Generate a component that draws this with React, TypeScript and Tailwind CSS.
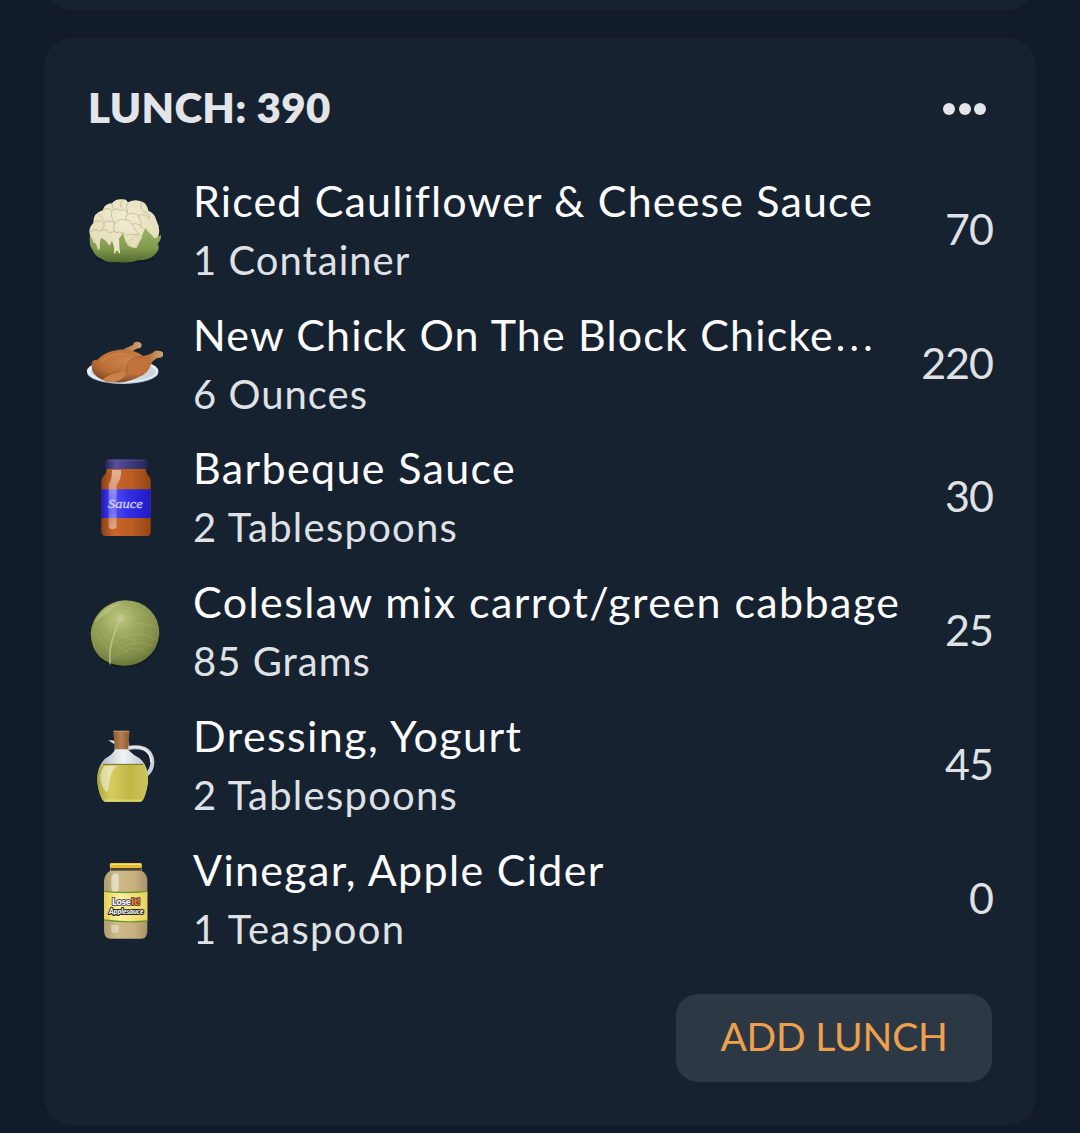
import type { ReactNode } from "react";

type FoodItem = {
  name: string;
  truncated?: boolean;
  serving: string;
  calories: number;
  icon: ReactNode;
  nameTracking: string;
  servingTracking: string;
};

function Icon({ viewBox, children }: { viewBox: string; children: ReactNode }) {
  return (
    <svg viewBox={viewBox} className="h-[80px] w-[76px] shrink-0" aria-hidden="true">
      {children}
    </svg>
  );
}

function Cauliflower() {
  return (
    <Icon viewBox="36 29 228 240">
      <defs>
        <radialGradient id="cauli-head" cx="0.5" cy="0.35" r="0.75">
          <stop offset="0" stopColor="#f1ebd0" />
          <stop offset="0.7" stopColor="#e6dfbc" />
          <stop offset="1" stopColor="#c9c298" />
        </radialGradient>
        <linearGradient id="cauli-leaf" x1="0" y1="0" x2="0" y2="1">
          <stop offset="0" stopColor="#9bb468" />
          <stop offset="0.6" stopColor="#80994c" />
          <stop offset="1" stopColor="#52692e" />
        </linearGradient>
      </defs>
      <ellipse cx="150" cy="235" rx="90" ry="14" fill="#0f1824" opacity="0.6" />
      <path
        d="M44 160 Q40 142 55 128 Q54 98 83 90 Q88 70 111 69 Q122 54 143 57 Q153 55 159 66 Q180 54 202 64 Q216 70 220 91 Q239 98 245 122 Q256 142 251 165 L240 215 L190 230 H90 L55 205 Z"
        fill="url(#cauli-head)"
      />
      <g fill="none" stroke="#aaa37c" strokeWidth="2" opacity="0.8">
        <path d="M83 90 Q98 78 111 92 Q121 81 137 90 Q156 83 158 103 Q177 94 190 106 Q211 98 220 112" />
        <path d="M55 128 Q70 114 86 127 Q104 117 119 128 Q137 113 151 119 Q166 118 171 132 Q190 125 203 144" />
        <path d="M47 156 Q60 142 74 153 Q88 141 105 158 Q119 150 125 157 Q142 151 153 165 Q176 160 191 163" />
        <path d="M111 92 Q104 108 119 128 Q111 145 123 158 M158 103 Q148 112 153 121 M190 106 Q202 123 198 142 M159 66 Q150 79 158 96 M171 132 Q181 150 193 163 M86 127 Q91 142 78 149" />
        <path d="M111 69 Q110 84 120 88 M143 58 Q132 72 141 84 M202 64 Q191 78 205 93 Q226 99 222 119 M68 98 Q79 109 87 121" />
      </g>
      <path
        d="M45 166 Q53 174 56 188 Q62 184 67 203 Q68 214 75 205 Q73 179 79 173 Q91 176 103 197 L111 181 L120 208 L134 214 L132 176 L143 158 L153 186 Q160 204 185 203 L211 142 Q217 153 232 166 Q239 182 257 164 Q261 175 248 191 Q256 205 245 216 Q229 240 190 240 Q165 250 126 245 Q97 249 82 237 Q60 229 53 210 Q41 194 45 166Z"
        fill="url(#cauli-leaf)"
      />
      <path d="M121 165 L121 206 M121 200 L119 219 M123 204 L126 212 M130 180 L129 204 L134 219" stroke="#eee8cd" strokeWidth="5" fill="none" />
      <path d="M154 186 L187 162 L202 171 L183 203 Q164 202 154 186Z" fill="#e5deba" stroke="#aba57d" />
    </Icon>
  );
}

function Chicken() {
  return (
    <Icon viewBox="36 10 228 240">
      <defs>
        <radialGradient id="chicken-body" cx="0.5" cy="0.35" r="0.65">
          <stop offset="0" stopColor="#cd8549" />
          <stop offset="0.65" stopColor="#b96c35" />
          <stop offset="1" stopColor="#7e4b27" />
        </radialGradient>
        <linearGradient id="chicken-bone" x1="0" y1="0" x2="1" y2="0">
          <stop offset="0" stopColor="#ad6935" />
          <stop offset="1" stopColor="#d3a67b" />
        </linearGradient>
      </defs>
      <ellipse cx="143" cy="155" rx="107" ry="35" fill="#b8c9dd" />
      <ellipse cx="143" cy="151" rx="107" ry="35" fill="#eef4fb" />
      <ellipse cx="145" cy="153" rx="99" ry="29" fill="#cbd6e3" />
      <path
        d="M134 93 Q156 79 174 73 Q176 62 187 63 Q201 64 200 75 Q198 84 184 84 L168 94Z"
        fill="url(#chicken-bone)"
      />
      <path
        d="M51 123 Q58 116 66 118 Q91 91 131 87 Q175 85 205 106 Q216 104 232 97 Q238 87 250 90 Q267 92 265 103 Q262 113 247 111 Q231 117 228 132 Q220 158 191 169 Q156 188 119 185 Q72 182 56 158 Q47 143 51 123Z"
        fill="url(#chicken-body)"
      />
      <path d="M213 111 L235 97 Q238 89 250 90 Q267 92 265 103 Q262 113 247 111 L227 126Z" fill="url(#chicken-bone)" />
      <path d="M157 143 Q157 116 187 111 Q208 106 224 121 Q218 151 188 163 Q163 164 157 143" fill="#c0733c" />
      <path d="M157 153 Q150 119 181 111 Q195 105 211 112" fill="none" stroke="#965728" strokeWidth="2" />
      <path d="M82 177 Q100 162 126 154 Q145 148 154 159 Q146 176 119 184 Q94 187 82 177Z" fill="#c98348" />
      <path d="M83 176 Q103 156 137 152" fill="none" stroke="#965528" strokeWidth="2" />
      <path d="M76 124 Q112 93 154 101" fill="none" stroke="#df9856" strokeWidth="6" opacity="0.35" />
    </Icon>
  );
}

function SauceJar() {
  return (
    <Icon viewBox="36 36 228 240">
      <defs>
        <linearGradient id="sauce-glass">
          <stop offset="0" stopColor="#8d4015" />
          <stop offset="0.25" stopColor="#c9652c" />
          <stop offset="0.6" stopColor="#bb5c22" />
          <stop offset="1" stopColor="#954515" />
        </linearGradient>
        <linearGradient id="sauce-label">
          <stop offset="0" stopColor="#1c18bd" />
          <stop offset="0.25" stopColor="#514df1" />
          <stop offset="0.55" stopColor="#322ee4" />
          <stop offset="1" stopColor="#2119c4" />
        </linearGradient>
        <linearGradient id="sauce-lid">
          <stop offset="0" stopColor="#24225b" />
          <stop offset="0.25" stopColor="#56509b" />
          <stop offset="1" stopColor="#25235c" />
        </linearGradient>
        <linearGradient id="sauce-shine" x1="0" y1="0" x2="0" y2="1">
          <stop offset="0" stopColor="#fff" stopOpacity="0.5" />
          <stop offset="0.7" stopColor="#fff" stopOpacity="0.2" />
          <stop offset="1" stopColor="#fff" stopOpacity="0.45" />
        </linearGradient>
      </defs>
      <path d="M94 66 H213 Q211 86 223 95 Q228 102 227 116 V260 Q227 273 214 273 H92 Q79 273 79 259 V112 Q79 99 88 91 Q97 83 94 66Z" fill="url(#sauce-glass)" />
      <path d="M79 133 H227 V219 H79Z" fill="url(#sauce-label)" />
      <path d="M111 75 H138 Q140 103 125 119 V244 Q124 252 113 252 Q101 252 101 242 V118 Q112 104 111 75Z" fill="url(#sauce-shine)" />
      <rect x="90" y="43" width="127" height="29" rx="8" fill="url(#sauce-lid)" />
      <path d="M98 47 H209" stroke="#5b5596" strokeWidth="2" />
      <text x="99" y="189" textLength="104" lengthAdjust="spacingAndGlyphs" fill="#d0cdff" stroke="#d0cdff" strokeWidth="1" className="font-['Liberation_Serif',serif] text-[40px] italic">
        Sauce
      </text>
    </Icon>
  );
}

function Cabbage() {
  return (
    <Icon viewBox="36 17 228 240">
      <defs>
        <radialGradient id="cabbage-body" cx="0.42" cy="0.28" r="0.75">
          <stop offset="0" stopColor="#bcc683" />
          <stop offset="0.35" stopColor="#9ca85d" />
          <stop offset="0.75" stopColor="#84904a" />
          <stop offset="1" stopColor="#667236" />
        </radialGradient>
      </defs>
      <ellipse cx="150" cy="150" rx="105" ry="98" fill="#101b20" opacity="0.7" />
      <path d="M47 143 Q50 106 76 78 Q108 46 151 45 Q196 45 226 75 Q254 105 253 147 Q248 196 212 221 Q183 242 144 241 Q105 240 75 216 Q48 188 47 143Z" fill="url(#cabbage-body)" />
      <path d="M60 111 Q76 76 106 61 Q122 53 145 50 Q119 64 101 83 Q77 94 60 111Z" fill="#ccd394" opacity="0.45" />
      <path d="M105 237 Q101 190 117 148 Q123 126 138 97" fill="none" stroke="#c4cb94" strokeWidth="5" opacity="0.75" />
      <g fill="none" stroke="#c4ca8a" strokeWidth="2" opacity="0.35">
        <path d="M106 198 Q82 180 69 150 M109 171 Q88 153 79 126 M117 148 Q101 129 98 108" />
        <path d="M106 218 Q137 177 193 172 Q222 175 239 185 M111 177 Q145 145 189 145 Q222 150 245 163 M120 143 Q144 119 189 114 Q219 114 243 127" />
        <path d="M105 226 Q145 190 181 190 Q201 192 215 202 M147 108 Q178 82 220 91 M146 97 Q160 69 181 57 M145 154 Q166 156 187 170 M129 183 Q146 188 160 203" />
      </g>
      <circle cx="139" cy="98" r="12" fill="#e2e5ac" opacity="0.2" />
    </Icon>
  );
}

function OilJug() {
  return (
    <Icon viewBox="36 28 228 240">
      <defs>
        <linearGradient id="oil-fill">
          <stop offset="0" stopColor="#aaa637" />
          <stop offset="0.25" stopColor="#d4cd61" />
          <stop offset="0.65" stopColor="#c0b745" />
          <stop offset="1" stopColor="#cdc55c" />
        </linearGradient>
        <linearGradient id="oil-glass">
          <stop offset="0" stopColor="#a8b1bc" />
          <stop offset="0.5" stopColor="#f1f3f5" />
          <stop offset="1" stopColor="#b9c1c9" />
        </linearGradient>
        <linearGradient id="oil-cork">
          <stop offset="0" stopColor="#8a5c33" />
          <stop offset="0.5" stopColor="#b57f4d" />
          <stop offset="1" stopColor="#8c5a30" />
        </linearGradient>
      </defs>
      <path d="M160 97 Q185 92 207 99 Q231 109 232 139 Q232 161 216 176" fill="none" stroke="#c8d0d9" strokeWidth="12" />
      <path d="M164 94 Q190 91 208 101 Q229 114 228 140" fill="none" stroke="#eef2f5" strokeWidth="5" />
      <path d="M100 73 L119 75 V86 Q109 80 100 73Z" fill="#e8ecef" />
      <path d="M119 78 H161 V104 Q175 119 193 127 Q218 148 219 184 Q220 217 207 243 Q201 259 190 259 H96 Q84 258 79 243 Q66 217 67 185 Q69 150 90 129 Q114 116 119 103Z" fill="url(#oil-glass)" />
      <path d="M84 145 H205 Q219 163 219 187 Q217 224 207 248 Q203 259 192 259 H94 Q83 259 78 245 Q67 220 67 188 Q67 162 84 145Z" fill="url(#oil-fill)" />
      <path d="M84 146 H205" stroke="#777431" strokeWidth="3" />
      <path d="M89 151 H124 Q105 171 102 208 Q100 233 91 226 Q75 207 76 178 Q78 163 89 151Z" fill="#fff" opacity="0.48" />
      <path d="M87 254 H201" stroke="#e1dc7e" strokeWidth="5" opacity="0.7" />
      <path d="M114 45 H164 L159 101 H121Z" fill="url(#oil-cork)" />
      <path d="M116 47 H162" stroke="#c99868" strokeWidth="3" />
    </Icon>
  );
}

function ApplesauceJar() {
  return (
    <Icon viewBox="36 24 228 240">
      <defs>
        <linearGradient id="apple-glass">
          <stop offset="0" stopColor="#b19c70" />
          <stop offset="0.3" stopColor="#cfba8b" />
          <stop offset="0.7" stopColor="#c8b07e" />
          <stop offset="1" stopColor="#a89369" />
        </linearGradient>
        <linearGradient id="apple-label">
          <stop offset="0" stopColor="#e3d056" />
          <stop offset="0.35" stopColor="#fff29a" />
          <stop offset="1" stopColor="#ead05f" />
        </linearGradient>
      </defs>
      <path d="M105 49 H200 V59 Q216 68 217 85 V240 Q216 263 199 263 H105 Q88 262 87 240 V88 Q89 70 105 60Z" fill="url(#apple-glass)" />
      <path d="M107 51 H198 V59 H107Z" fill="#4c4437" />
      <path d="M87 119 Q152 128 217 120 V211 Q151 217 87 208Z" fill="url(#apple-label)" />
      <path d="M87 121 Q152 128 217 121 M87 207 Q151 216 217 210" stroke="#6b972b" strokeWidth="4" fill="none" />
      <path d="M115 68 Q127 65 131 72 V113 Q131 122 120 122 Q109 122 109 111 V84 Q109 72 115 68Z" fill="#fff" opacity="0.5" />
      <path d="M109 222 H131 V239 Q131 246 120 246 Q109 246 109 239Z" fill="#fff" opacity="0.35" />
      <rect x="104" y="36" width="97" height="15" rx="5" fill="#e6bd32" />
      <path d="M107 40 H198" stroke="#f9df70" strokeWidth="4" />
      <g strokeLinejoin="round" paintOrder="stroke" className="font-['Lato',sans-serif] font-black">
        <text x="111" y="163" textLength="56" lengthAdjust="spacingAndGlyphs" fill="#fff" stroke="#535267" strokeWidth="6" className="text-[27px]">
          Lose
        </text>
        <text x="169" y="163" textLength="26" lengthAdjust="spacingAndGlyphs" fill="#e48b42" stroke="#74452a" strokeWidth="6" className="text-[27px]">
          It!
        </text>
        <text x="102" y="188" textLength="103" lengthAdjust="spacingAndGlyphs" fill="#fff" stroke="#222" strokeWidth="6" className="text-[20px] italic">
          Applesauce
        </text>
      </g>
    </Icon>
  );
}

const items: FoodItem[] = [
  { name: "Riced Cauliflower & Cheese Sauce", serving: "1 Container", calories: 70, icon: <Cauliflower />, nameTracking: "tracking-[1.13px]", servingTracking: "tracking-[1px]" },
  { name: "New Chick On The Block Chicke", truncated: true, serving: "6 Ounces", calories: 220, icon: <Chicken />, nameTracking: "tracking-[1.15px]", servingTracking: "tracking-[1px]" },
  { name: "Barbeque Sauce", serving: "2 Tablespoons", calories: 30, icon: <SauceJar />, nameTracking: "tracking-[1.35px]", servingTracking: "tracking-[1.25px]" },
  { name: "Coleslaw mix carrot/green cabbage", serving: "85 Grams", calories: 25, icon: <Cabbage />, nameTracking: "tracking-[1.42px]", servingTracking: "tracking-[1px]" },
  { name: "Dressing, Yogurt", serving: "2 Tablespoons", calories: 45, icon: <OilJug />, nameTracking: "tracking-[1.43px]", servingTracking: "tracking-[1.25px]" },
  { name: "Vinegar, Apple Cider", serving: "1 Teaspoon", calories: 0, icon: <ApplesauceJar />, nameTracking: "tracking-[1.3px]", servingTracking: "tracking-[1.3px]" },
];

function FoodRow({ item }: { item: FoodItem }) {
  return (
    <li className="flex h-[133.75px] items-center whitespace-nowrap">
      {item.icon}
      <div className="ml-[30px] w-0 grow">
        <p className={`h-[60px] text-[43px] leading-[60px] text-[#fcfcfd] ${item.nameTracking}`}>
          {item.name}
          {item.truncated && <span className="text-[56px] font-light leading-[0]">…</span>}
        </p>
        <p className={`text-[40px] leading-[58px] text-[#dfe1e4] ${item.servingTracking}`}>{item.serving}</p>
      </div>
      <span className="-mt-[2px] text-[43px] leading-[60px] tracking-[-1px] text-[#dfe1e4]">{item.calories}</span>
    </li>
  );
}

export default function App() {
  return (
    <main className="flex h-[1133px] w-[1080px] flex-col overflow-hidden bg-[#111b29] px-[44px] font-['Lato',sans-serif]">
      <div className="-mt-[50px] h-[60px] shrink-0 rounded-b-[28px] bg-[#172231]" />
      <section className="mt-7 flex h-[1087px] shrink-0 flex-col rounded-[28px] bg-[#172231] px-[43px]">
        <header className="flex h-[125px] shrink-0 items-center justify-between pt-[14px]">
          <h2 className="-mt-px ml-px text-[42px] font-extrabold leading-[60px] tracking-[0.3px] text-[#e4e5e8]">LUNCH: 390</h2>
          <button type="button" aria-label="Lunch options" className="mr-[7px] mt-[3px] flex gap-[3.5px]">
            <span className="size-[12px] rounded-full bg-[#e4e5e8]" />
            <span className="size-[12px] rounded-full bg-[#e4e5e8]" />
            <span className="size-[12px] rounded-full bg-[#e4e5e8]" />
          </button>
        </header>
        <ul>
          {items.map((item) => (
            <FoodRow key={item.name} item={item} />
          ))}
        </ul>
        <button type="button" className="mr-[1px] mt-[28.5px] h-[88px] w-[316px] shrink-0 self-end rounded-[22px] bg-[#2d3845] pb-[4px] text-[39px] tracking-[-0.2px] text-[#eda14d]">
          ADD LUNCH
        </button>
      </section>
    </main>
  );
}
